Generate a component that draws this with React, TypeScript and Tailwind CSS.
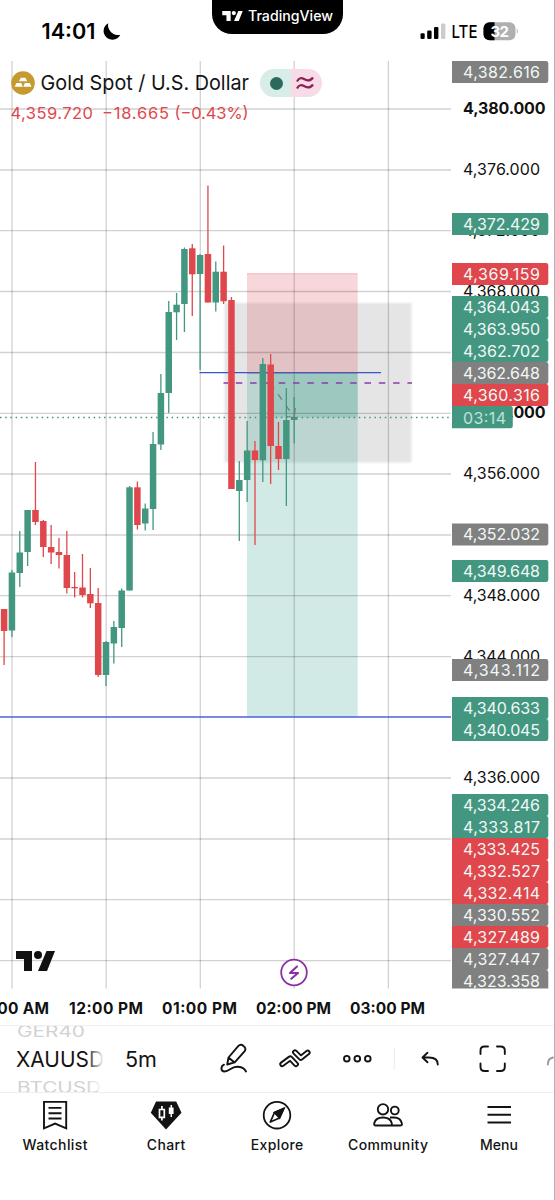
import React from "react";

type Tone = "gray" | "green" | "red";
type Candle = [dir: "u" | "d", high: number, top: number, bottom: number, low: number];

const UP = "#439781";
const DOWN = "#df474c";
const TONES: Record<Tone, string> = { gray: "#808080", green: "#439781", red: "#df474c" };

const candles: Candle[] = [
  ["d", 609, 609, 631, 665],
  ["u", 570, 572.5, 630.5, 637],
  ["u", 531, 552.5, 573, 587],
  ["u", 510, 510, 552, 566],
  ["d", 462, 510, 522, 525],
  ["d", 520, 521, 547, 557],
  ["d", 525, 547, 552.5, 564],
  ["d", 538, 552, 555, 568.5],
  ["d", 531, 555, 588, 593.5],
  ["d", 572, 587, 588.3, 597.5],
  ["d", 554, 587.5, 595, 597.5],
  ["d", 568, 594, 603.3, 608],
  ["d", 588, 603, 675, 677],
  ["u", 641, 642, 675, 686],
  ["u", 621, 627, 643.5, 663.5],
  ["u", 588.5, 590.5, 628, 647],
  ["u", 486, 487.3, 590.5, 590.5],
  ["d", 481.5, 487.3, 525, 529.5],
  ["u", 503.5, 508.5, 523.5, 530.5],
  ["u", 432, 444, 509, 530],
  ["u", 374, 393, 444.5, 450],
  ["u", 301, 312, 393, 413],
  ["u", 293, 304.7, 312.3, 340],
  ["u", 247.5, 249, 304, 332],
  ["d", 244, 248.3, 274.3, 316],
  ["u", 254, 255, 274, 370],
  ["d", 185.5, 254, 302.5, 302.5],
  ["u", 261.5, 271.7, 302.5, 311.5],
  ["d", 245.5, 271.7, 301.3, 304],
  ["d", 297, 300, 489, 489],
  ["u", 461, 480, 491, 541],
  ["u", 421, 450.5, 480, 502],
  ["d", 441, 450.5, 460, 545],
  ["u", 358, 364, 460.3, 482],
  ["d", 354, 364.5, 446, 484],
  ["d", 422, 446, 459, 470],
  ["u", 388, 420, 459, 506],
  ["u", 397, 417, 420, 443.5],
];

const columns = [12, 106.2, 200.3, 294.2, 388.4];
const rows = [109, 170, 230.7, 291.5, 352.5, 413.4, 474, 535, 595.7, 656.7, 778, 839, 899.7, 960.7];

const prices: { y: number; text: string; bold?: boolean }[] = [
  { y: 108, text: "4,380.000", bold: true },
  { y: 169, text: "4,376.000" },
  { y: 230, text: "4,372.000" },
  { y: 291, text: "4,368.000" },
  { y: 412, text: "4,360.000", bold: true },
  { y: 473, text: "4,356.000" },
  { y: 595, text: "4,348.000" },
  { y: 656, text: "4,344.000" },
  { y: 777, text: "4,336.000" },
];

const tags: { top: number; text: string; tone: Tone }[] = [
  { top: 61, text: "4,382.616", tone: "gray" },
  { top: 213, text: "4,372.429", tone: "green" },
  { top: 263, text: "4,369.159", tone: "red" },
  { top: 296, text: "4,364.043", tone: "green" },
  { top: 318, text: "4,363.950", tone: "green" },
  { top: 340, text: "4,362.702", tone: "green" },
  { top: 362, text: "4,362.648", tone: "gray" },
  { top: 384, text: "4,360.316", tone: "red" },
  { top: 523.5, text: "4,352.032", tone: "gray" },
  { top: 560, text: "4,349.648", tone: "green" },
  { top: 659, text: "4,343.112", tone: "gray" },
  { top: 697, text: "4,340.633", tone: "green" },
  { top: 719, text: "4,340.045", tone: "green" },
  { top: 794, text: "4,334.246", tone: "green" },
  { top: 816, text: "4,333.817", tone: "green" },
  { top: 838, text: "4,333.425", tone: "red" },
  { top: 860, text: "4,332.527", tone: "red" },
  { top: 882, text: "4,332.414", tone: "red" },
  { top: 904, text: "4,330.552", tone: "gray" },
  { top: 926, text: "4,327.489", tone: "red" },
  { top: 948, text: "4,327.447", tone: "gray" },
  { top: 970, text: "4,323.358", tone: "gray" },
];

const times = [
  { x: -22, w: 71, text: "11:00 AM" },
  { x: 69, w: 74, text: "12:00 PM" },
  { x: 162, w: 75, text: "01:00 PM" },
  { x: 256, w: 75, text: "02:00 PM" },
  { x: 350, w: 75, text: "03:00 PM" },
];

function TvMark({ className }: { className: string }) {
  return (
    <svg viewBox="0 0 39 20" className={className} fill="currentColor">
      <path d="M0 0H16V20H8V8H0Z" />
      <circle cx="22" cy="4" r="4" />
      <path d="M30.5 0H39L31 20H22Z" />
    </svg>
  );
}

function Tag({ top, text, tone }: { top: number; text: string; tone: Tone }) {
  return (
    <g>
      <path d={`M452 ${top}H546a2.3 2.3 0 0 1 2.3 2.3V${top + 19.7}a2.3 2.3 0 0 1 -2.3 2.3H452Z`} fill={TONES[tone]} />
      <text x="463" y={top + 16.5} textLength="77" fill="#f1f8f6" fontSize="16">{text}</text>
    </g>
  );
}

function Chart() {
  return (
    <svg viewBox="0 60 555 965" className="block h-[965px] w-[555px]" style={{ fontFamily: "Inter, sans-serif" }}>
      <defs>
        <filter id="soft" x="-5%" y="-5%" width="110%" height="110%">
          <feGaussianBlur stdDeviation="1" />
        </filter>
        <clipPath id="pane"><rect x="0" y="60" width="555" height="928.5" /></clipPath>
      </defs>
      <rect x="224.5" y="303" width="187" height="159.5" fill="#000" fillOpacity="0.1" filter="url(#soft)" />
      <rect x="247" y="273.5" width="110.7" height="99.5" fill="#dc3545" fillOpacity="0.2" />
      <rect x="247" y="373" width="110.7" height="344" fill="#1f957b" fillOpacity="0.2" />
      <rect x="270.7" y="373" width="87" height="44.5" fill="#1f957b" fillOpacity="0.2" />
      <path d="M247 273.8H357.7" stroke="#dc3545" strokeOpacity="0.25" />
      <g stroke="#000" strokeOpacity="0.18" strokeWidth="1.3">
        {columns.map((x) => <path key={x} d={`M${x} 61V988.5`} />)}
        {rows.map((y) => <path key={y} d={`M0 ${y}H451`} />)}
      </g>
      <path d="M199.5 372.6H381" stroke="#3656cf" strokeWidth="1.3" />
      <path d="M247 372.8H357.7" stroke="#6a5a8a" strokeOpacity="0.6" strokeWidth="1.3" />
      <path d="M0 717H451" stroke="#4a63d6" strokeWidth="1.6" />
      <path d="M223.5 383H412" stroke="#8a3bab" strokeWidth="1.6" strokeDasharray="6.5 7.8" strokeDashoffset="2" />
      <path d="M0 417.5H451" stroke={UP} strokeWidth="1.3" strokeDasharray="1.5 3.7" />
      <path d="M271 384L294 417" stroke="#777" strokeWidth="1.2" strokeDasharray="6.5 7" strokeDashoffset="1" fill="none" />
      {candles.map(([dir, high, top, bottom, low], i) => {
        const x = 4.1 + i * 7.84;
        const c = dir === "u" ? UP : DOWN;
        return (
          <g key={i} fill={c}>
            <rect x={x - 0.65} y={high} width="1.3" height={low - high} />
            <rect x={x - 3.25} y={top} width="6.5" height={bottom - top} />
          </g>
        );
      })}
      <path d="M286.5 416.5Q291 416.3 294 419M295.3 408L294.3 418" stroke="#777" strokeWidth="1" fill="none" />

      <g fill="#111">
        {prices.map((p) => (
          <text key={p.text} x="463" y={p.y + 5.8} textLength={p.bold ? 82.5 : 77} fontSize="16" fontWeight={p.bold ? 700 : 400}>{p.text}</text>
        ))}
      </g>
      <g clipPath="url(#pane)">
        {tags.map((t) => <Tag key={t.text} {...t} />)}
      </g>
      <path d="M452 406H510.5a2.3 2.3 0 0 1 2.3 2.3V426a2.3 2.3 0 0 1 -2.3 2.3H452Z" fill={UP} />
      <text x="463" y="423.6" textLength="43" fontSize="16" fill="#bfe3d9">03:14</text>

      <g fill="#111" fontSize="15.5" fontWeight="650">
        {times.map((t) => <text key={t.text} x={t.x} y="1013.5" textLength={t.w}>{t.text}</text>)}
      </g>

      <circle cx="294" cy="972.5" r="12.8" fill="#fff" stroke="#8a2fa5" strokeWidth="1.8" />
      <path d="M297 966.5L290 973H298L291.3 978.7" fill="none" stroke="#8a2fa5" strokeWidth="2.1" strokeLinejoin="round" strokeLinecap="round" />
    </svg>
  );
}

function StatusBar() {
  return (
    <header className="relative flex h-[60px] justify-between">
      <div className="flex items-start pl-[42px] pt-[18px]">
        <svg viewBox="0 0 80 28" className="h-7 w-20">
          <text x="-0.5" y="21" textLength="54" lengthAdjust="spacingAndGlyphs" fontFamily="Inter, sans-serif" fontSize="21" fontWeight="600" fill="#000">14:01</text>
          <path d="M66.2 5.2A8.8 8.8 0 1 0 78.3 16.8A10 10 0 0 1 66.2 5.2Z" fill="#000" />
        </svg>
      </div>
      <div className="absolute left-[212px] top-0 flex h-[33.5px] w-[131px] items-center justify-center gap-[5px] rounded-b-[20px] bg-black pb-0.5 text-white">
        <TvMark className="h-[10.5px] w-[21px]" />
        <svg viewBox="0 0 85 20" className="h-5 w-[85px]">
          <text x="0" y="15" textLength="85" lengthAdjust="spacingAndGlyphs" fontFamily="Inter, sans-serif" fontSize="14" fontWeight="500" fill="#fff">TradingView</text>
        </svg>
      </div>
      <div className="flex items-start pr-[34px] pt-[21px]">
        <svg viewBox="0 0 100 22" className="h-[22px] w-[100px]">
          <rect x="0.5" y="12.3" width="4.2" height="5.7" rx="1.2" />
          <rect x="7.2" y="9.5" width="4.4" height="8.5" rx="1.2" />
          <rect x="14" y="6" width="4.4" height="12" rx="1.2" />
          <rect x="21" y="2.5" width="4.4" height="15.5" rx="1.2" fill="#ccc" />
          <text x="31.5" y="17.4" textLength="26" lengthAdjust="spacingAndGlyphs" fontFamily="Inter, sans-serif" fontSize="17.5" fontWeight="500">LTE</text>
          <clipPath id="cell"><rect x="63.5" y="1.2" width="32" height="18" rx="6" /></clipPath>
          <g clipPath="url(#cell)">
            <rect x="63" y="1" width="33" height="19" fill="#b0b0b0" />
            <rect x="63" y="1" width="11.5" height="19" fill="#000" />
          </g>
          <path d="M96.8 7.5q2.2 2.7 0 5.4Z" fill="#b0b0b0" />
          <text x="70.5" y="15.8" textLength="18.5" fontFamily="Inter, sans-serif" fontSize="15" fontWeight="700" fill="#fff">32</text>
        </svg>
      </div>
    </header>
  );
}

function Legend() {
  return (
    <div className="absolute left-[11px] top-2 font-[Inter,sans-serif]">
      <div className="flex h-[30px] items-center">
        <svg viewBox="0 0 24 24" className="size-[24px] shrink-0">
          <circle cx="12" cy="12" r="11.8" fill="#c69a2f" />
          <path d="M9.8 6.8h4.6l1.8 3.5H8ZM5.5 12h4.8l1.5 3.8H3.6ZM13.9 12h4.8l1.8 3.8h-8.2Z" fill="#fff" />
        </svg>
        <svg viewBox="0 0 214 30" className="ml-[5px] h-[30px] w-[214px]">
          <text x="0.5" y="22.4" textLength="208.5" lengthAdjust="spacingAndGlyphs" fontFamily="Inter, sans-serif" fontSize="20.5" fill="#131313">Gold Spot / U.S. Dollar</text>
        </svg>
        <div className="ml-[6px] flex h-[28px] w-[62px] overflow-hidden rounded-full">
          <div className="flex w-[31px] items-center justify-center bg-[#d8ece8] pl-0.5">
            <span className="size-[13px] rounded-full bg-[#2b6a5b]" />
          </div>
          <div className="flex w-[31px] items-center justify-center bg-[#f7dbe6]">
            <svg viewBox="0 0 18 14" className="h-3.5 w-[18px] -translate-x-0.5" fill="none" stroke="#8d2258" strokeWidth="2.2">
              <path d="M1 5.5C3 1.5 5.5 1.5 8.5 3.2S14.5 5 17 1.5M1 12.5C3 8.5 5.5 8.5 8.5 10.2S14.5 12 17 8.5" />
            </svg>
          </div>
        </div>
      </div>
      <svg viewBox="0 0 250 22" className="mt-1 h-[22px] w-[250px]" fontFamily="Inter, sans-serif" fontSize="16.5" fill="#df474c">
        <text x="-0.5" y="17.3" textLength="82.5">4,359.720</text>
        <text x="91" y="17.3" textLength="67">−18.665</text>
        <text x="163.5" y="17.3" textLength="74">(−0.43%)</text>
      </svg>
    </div>
  );
}

const ZIGZAG = "M282.2 1064.2L290.3 1058.2L296 1064.2M295 1052.3L300.8 1058L307.7 1052.5";

function Toolbar() {
  return (
    <div className="flex h-[68px] items-center overflow-hidden border-y border-[#efefef]">
      <svg viewBox="0 1025 555 68" className="h-[68px] w-[555px] shrink-0" fill="none" stroke="#131313" strokeWidth="1.9" strokeLinecap="round" strokeLinejoin="round">
        <defs>
          <linearGradient id="fade" gradientUnits="userSpaceOnUse" x1="86" x2="104" y1="0" y2="0">
            <stop offset="0" stopColor="#fff" stopOpacity="0" />
            <stop offset="1" stopColor="#fff" />
          </linearGradient>
        </defs>
        <g fill="#131313" stroke="none" fontFamily="Inter, sans-serif">
          <text x="17" y="1037" textLength="68" lengthAdjust="spacingAndGlyphs" fontSize="15.5" fill="#d2d2d2">GER40</text>
          <text x="16" y="1066.7" textLength="88" lengthAdjust="spacingAndGlyphs" fontSize="21">XAUUSD</text>
          <text x="17" y="1092.5" textLength="84" lengthAdjust="spacingAndGlyphs" fontSize="15.5" fill="#d2d2d2">BTCUSD</text>
          <rect x="86" y="1027" width="25" height="64" fill="url(#fade)" />
          <text x="125" y="1066.7" textLength="32" lengthAdjust="spacingAndGlyphs" fontSize="21">5m</text>
        </g>
        <path d="M227.2 1064.5L228.5 1057.5L238.2 1046.2Q240.7 1043.5 243.5 1046Q246.8 1048.5 244.5 1051.4L234.7 1062.3ZM228.5 1057.5L234.5 1062.5M224 1064.7C220.5 1066.5 220.5 1071.5 224.5 1071.5C229.5 1071.5 231 1066.8 237 1066.8C242 1066.8 244.5 1068.5 246 1071.5" />
        <path d={ZIGZAG} strokeWidth="5.8" />
        <path d={ZIGZAG} strokeWidth="2" stroke="#fff" />
        <circle cx="346.8" cy="1058.7" r="2.8" />
        <circle cx="357.3" cy="1058.7" r="2.8" />
        <circle cx="367.8" cy="1058.7" r="2.8" />
        <path d="M394.3 1048V1070" stroke="#ececec" strokeWidth="1" />
        <path d="M427.5 1052.8L422.5 1057.5L427.5 1062.3M422.7 1057.5H429Q437.8 1057.5 437.8 1064.5" />
        <path d="M480.5 1054V1050.5Q480.5 1046.5 484.5 1046.5H488M497 1046.5H500.5Q504.8 1046.5 504.8 1050.5V1054M504.8 1063.5V1067Q504.8 1071 500.5 1071H497M488 1071H484.5Q480.5 1071 480.5 1067V1063.5" />
        <path d="M547.8 1064.5Q547.8 1058.5 553 1057.5" stroke="#999" />
      </svg>
    </div>
  );
}

const navIcons: Record<string, React.ReactNode> = {
  Watchlist: (
    <g fill="none" stroke="#131313" strokeWidth="1.9">
      <path d="M5 1.9H27.2V28.3L16.1 23.6L5 28.3ZM9.5 7.9H22.5M9.5 13.2H22.5M9.5 18.5H22.5" />
    </g>
  ),
  Chart: (
    <g>
      <path d="M6 1.5H26.2L31.5 12.8L16 29.5L0.8 12.8Z" fill="#131313" />
      <path d="M9.5 9.5H14.3V17.3H9.5ZM11.9 6V9.5M11.9 17.3V20.5" fill="none" stroke="#fff" strokeWidth="1.7" />
      <path d="M18.8 7.5H23.6V14H18.8ZM20.5 5H22V17H20.5Z" fill="#fff" />
    </g>
  ),
  Explore: (
    <g fill="none" stroke="#131313" strokeWidth="1.8">
      <circle cx="16" cy="15.2" r="13.3" />
      <path d="M22.8 8.5L18.5 18L9.3 22L13.5 12.5Z" strokeLinejoin="round" />
      <path d="M22.8 8.5L18.5 18L13.5 12.5Z" fill="#131313" />
    </g>
  ),
  Community: (
    <g fill="none" stroke="#131313" strokeWidth="1.9">
      <circle cx="11" cy="9.3" r="5.2" />
      <circle cx="22.8" cy="10.5" r="3.9" />
      <path d="M3.5 25.5C2 25.5 2 24.5 2.3 23C3.3 19 6 17.5 11 17.5S18.7 19 19.7 23C20 24.5 20 25.5 18.5 25.5ZM18.5 25.5H28.5C30 25.5 30.2 24.5 29.9 23.5C29 19 26 17.5 22 17.5H18" strokeLinejoin="round" />
    </g>
  ),
  Menu: <path d="M4.5 7H28M4.5 14.8H28M4.5 22.5H28" stroke="#131313" strokeWidth="2" />,
};

const navItems: { name: string; width: number }[] = [
  { name: "Watchlist", width: 65 },
  { name: "Chart", width: 38.5 },
  { name: "Explore", width: 52.5 },
  { name: "Community", width: 80 },
  { name: "Menu", width: 38 },
];

function BottomNav() {
  return (
    <nav className="grid h-[107px] grid-cols-5">
      {navItems.map(({ name, width }) => (
        <div key={name} className="flex flex-col items-center pt-[7px]">
          <svg viewBox="0 0 32 32" className="size-8 shrink-0">{navIcons[name]}</svg>
          <svg viewBox="0 0 100 20" className="mt-[3px] h-5 w-[100px] shrink-0">
            <text x={50 - width / 2} y="15" textLength={width} fontFamily="Inter, sans-serif" fontSize="14" fontWeight="550" fill="#131313">{name}</text>
          </svg>
        </div>
      ))}
    </nav>
  );
}

export default function App() {
  return (
    <div className="h-[1200px] w-[555px] overflow-hidden border-r border-[#b5b5b5] bg-white font-[Inter,sans-serif]">
      <StatusBar />
      <main className="relative h-[965px]">
        <Chart />
        <Legend />
        <TvMark className="absolute left-[15.5px] top-[891px] h-[20px] w-[39px] text-[#111]" />
      </main>
      <Toolbar />
      <BottomNav />
    </div>
  );
}
